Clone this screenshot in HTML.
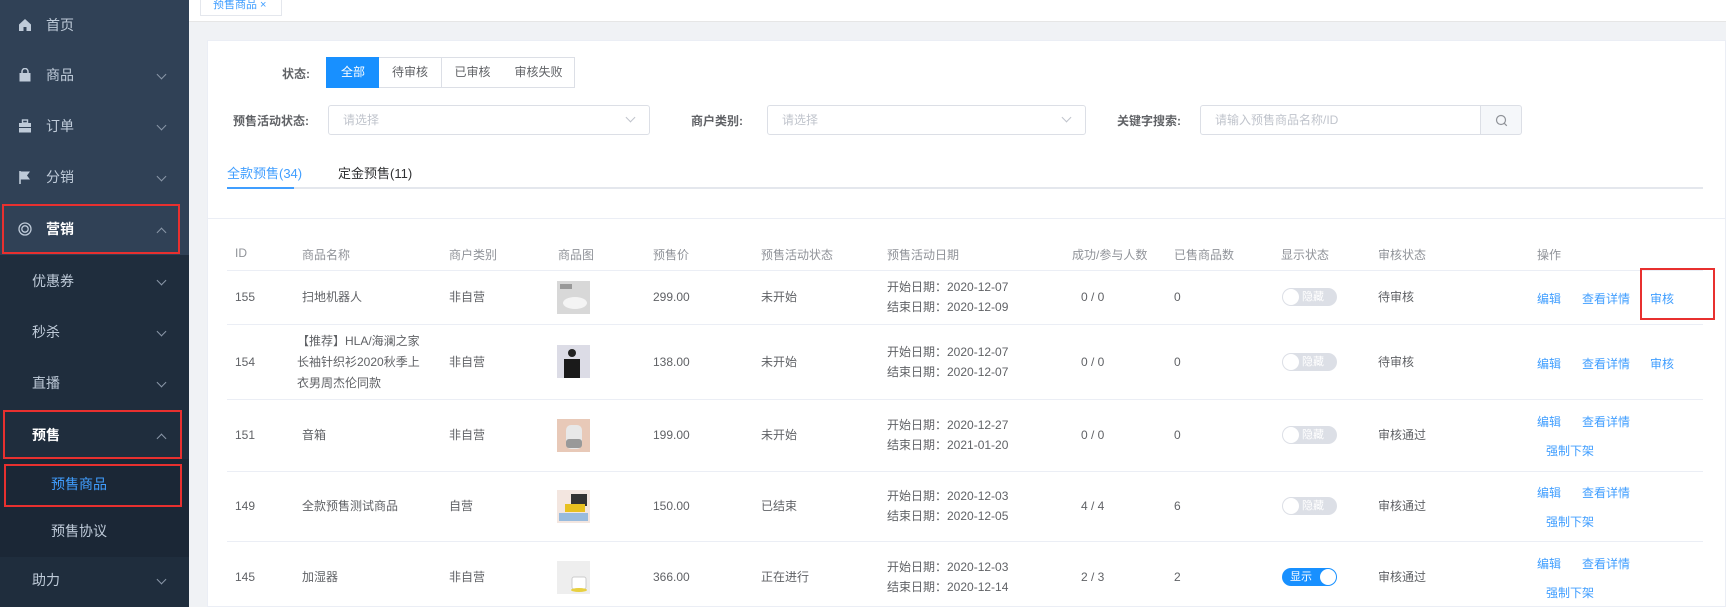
<!DOCTYPE html>
<html><head><meta charset="utf-8">
<style>
*{margin:0;padding:0;box-sizing:border-box}
body{width:1726px;height:607px;overflow:hidden;background:#f0f2f5;font-family:"Liberation Sans","Noto Sans CJK SC",sans-serif;font-size:13px;color:#606266;position:relative}
.a{position:absolute;white-space:nowrap}
#side{position:absolute;left:0;top:0;width:189px;height:607px;background:#304156}
#sub{position:absolute;left:0;top:255px;width:189px;height:352px;background:#1f2d3d}
.mi{position:absolute;left:0;width:189px;height:51px;line-height:51px;color:#bfcbd9;font-size:14px}
.mi .t{position:absolute;left:46px}
.mi .s{position:absolute;left:32px}
.mi .ss{position:absolute;left:51px}
.chev{position:absolute;left:158px;top:21px;width:7px;height:7px;border-right:1px solid #8a97a8;border-bottom:1px solid #8a97a8;transform:rotate(45deg)}
.up{transform:rotate(-135deg);top:25px}
.ico{position:absolute;left:18px;top:18px;width:14px;height:14px}
.red{position:absolute;border:2px solid #e8302f}
#card{position:absolute;left:207px;top:40px;width:1519px;height:567px;background:#fff;border:1px solid #ebeef5}
.btn{position:absolute;top:57px;height:31px;line-height:29px;text-align:center;border:1px solid #dcdfe6;background:#fff;font-size:12px;color:#606266}
.sel{position:absolute;top:105px;height:30px;border:1px solid #dcdfe6;border-radius:3px;background:#fff;color:#c0c4cc;font-size:12px;line-height:28px;padding-left:14px}
.lab{position:absolute;top:112px;font-size:12px;color:#606266;font-weight:bold}
.hl{position:absolute;left:227px;width:1476px;height:1px;background:#ebeef5}
.th{position:absolute;top:246px;font-size:12px;color:#909399}
.td{position:absolute;font-size:12px;color:#606266;line-height:20px}
.lk{position:absolute;font-size:12px;color:#409eff}
.sw{position:absolute;left:1282px;width:55px;height:18px;border-radius:9px;background:#dcdfe6;color:#fff;font-size:11px;line-height:18px}
.sw i{position:absolute;left:1px;top:1px;width:16px;height:16px;border-radius:50%;background:#fff}
.sw span{position:absolute;left:20px}
.th2{position:absolute;left:557px;width:33px;height:33px}
</style></head><body>
<div id="side"></div>
<div id="sub"></div>
<div class="mi" style="top:0"><svg class="ico" viewBox="0 0 14 14"><path d="M7 1L1 6.5V13h4.5V9h3v4H13V6.5z" fill="#bfcbd9"/></svg><span class="t">首页</span></div>
<div class="mi" style="top:50px"><svg class="ico" viewBox="0 0 14 14"><path d="M4 5V3.5a3 3 0 016 0V5" stroke="#bfcbd9" fill="none" stroke-width="1.5"/><rect x="1.5" y="5" width="11" height="8.5" fill="#bfcbd9"/></svg><span class="t">商品</span><i class="chev"></i></div>
<div class="mi" style="top:101px"><svg class="ico" viewBox="0 0 14 14"><rect x="4.5" y="1" width="5" height="3" fill="none" stroke="#bfcbd9" stroke-width="1.4"/><rect x="1" y="4" width="12" height="4" fill="#bfcbd9"/><rect x="1" y="9" width="12" height="4.5" fill="#bfcbd9"/></svg><span class="t">订单</span><i class="chev"></i></div>
<div class="mi" style="top:152px"><svg class="ico" viewBox="0 0 14 14"><path d="M2 1v13" stroke="#bfcbd9" stroke-width="1.6"/><path d="M2.5 1.5H12l-3 4 3 4H2.5z" fill="#bfcbd9"/></svg><span class="t">分销</span><i class="chev"></i></div>
<div class="mi" style="top:204px;color:#fff"><svg class="ico" viewBox="0 0 14 14"><circle cx="7" cy="7" r="6" fill="none" stroke="#bfcbd9" stroke-width="1.3"/><circle cx="7" cy="7" r="3.2" fill="none" stroke="#bfcbd9" stroke-width="1.3"/></svg><span class="t" style="font-weight:bold">营销</span><i class="chev up"></i></div>
<div class="mi" style="top:256px"><span class="s">优惠券</span><i class="chev"></i></div>
<div class="mi" style="top:307px"><span class="s">秒杀</span><i class="chev"></i></div>
<div class="mi" style="top:358px"><span class="s">直播</span><i class="chev"></i></div>
<div class="mi" style="top:410px;color:#fff"><span class="s" style="font-weight:bold">预售</span><i class="chev up"></i></div>
<div class="mi" style="top:459px;background:#1b2736;color:#409eff"><span class="ss">预售商品</span></div>
<div class="mi" style="top:506px;background:#1b2736"><span class="ss">预售协议</span></div>
<div class="mi" style="top:555px"><span class="s">助力</span><i class="chev"></i></div>
<div class="red" style="left:2px;top:204px;width:178px;height:50px"></div>
<div class="red" style="left:3px;top:410px;width:179px;height:49px"></div>
<div class="red" style="left:4px;top:464px;width:178px;height:43px"></div>

<div class="a" style="left:189px;top:0;width:1537px;height:22px;background:#fff;border-bottom:1px solid #e6e6e6"></div>
<div class="a" style="left:200px;top:0;width:82px;height:16px;background:#fff;border:1px solid #e4e7ed;border-top:0;color:#409eff;font-size:11px;line-height:10px;padding-left:12px">预售商品 ×</div>

<div id="card"></div>
<div class="a" style="left:282px;top:65px;font-size:12px;font-weight:bold">状态:</div>
<div class="btn" style="left:326px;width:54px;background:#1890ff;border-color:#1890ff;color:#fff">全部</div>
<div class="btn" style="left:379px;width:63px;border-left:0">待审核</div>
<div class="btn" style="left:441px;width:63px">已审核</div>
<div class="btn" style="left:503px;width:72px;border-left:0">审核失败</div>

<div class="lab" style="left:233px">预售活动状态:</div>
<div class="sel" style="left:328px;width:322px">请选择<i class="chev" style="left:298px;top:8px;border-color:#c0c4cc"></i></div>
<div class="lab" style="left:691px">商户类别:</div>
<div class="sel" style="left:767px;width:319px">请选择<i class="chev" style="left:295px;top:8px;border-color:#c0c4cc"></i></div>
<div class="lab" style="left:1117px">关键字搜索:</div>
<div class="sel" style="left:1200px;width:281px;border-radius:3px 0 0 3px">请输入预售商品名称/ID</div>
<div class="a" style="left:1480px;top:105px;width:42px;height:30px;background:#f5f7fa;border:1px solid #dcdfe6;border-radius:0 3px 3px 0"><svg style="position:absolute;left:14px;top:8px" width="13" height="13" viewBox="0 0 13 13"><circle cx="6" cy="6" r="4.5" fill="none" stroke="#909399" stroke-width="1.2"/><path d="M9.3 9.3l2.5 2.5" stroke="#909399" stroke-width="1.2"/></svg></div>

<div class="a" style="left:227px;top:163px;color:#409eff">全款预售(34)</div>
<div class="a" style="left:338px;top:163px;color:#303133">定金预售(11)</div>
<div class="a" style="left:227px;top:187px;width:1476px;height:2px;background:#e4e7ed"></div>
<div class="a" style="left:227px;top:187px;width:67px;height:2px;background:#409eff"></div>
<div class="a" style="left:208px;top:218px;width:1518px;height:1px;background:#ebeef5"></div>

<div class="th" style="left:235px">ID</div>
<div class="th" style="left:302px">商品名称</div>
<div class="th" style="left:449px">商户类别</div>
<div class="th" style="left:558px">商品图</div>
<div class="th" style="left:653px">预售价</div>
<div class="th" style="left:761px">预售活动状态</div>
<div class="th" style="left:887px">预售活动日期</div>
<div class="th" style="left:1072px">成功/参与人数</div>
<div class="th" style="left:1174px">已售商品数</div>
<div class="th" style="left:1281px">显示状态</div>
<div class="th" style="left:1378px">审核状态</div>
<div class="th" style="left:1537px">操作</div>
<div class="hl" style="top:270px"></div>
<div class="hl" style="top:324px"></div>
<div class="hl" style="top:399px"></div>
<div class="hl" style="top:471px"></div>
<div class="hl" style="top:541px"></div>

<!-- row1 c=297 -->
<div class="td" style="left:235px;top:287px">155</div>
<div class="td" style="left:302px;top:287px">扫地机器人</div>
<div class="td" style="left:449px;top:287px">非自营</div>
<svg class="th2" style="top:281px" viewBox="0 0 33 33"><rect width="33" height="33" fill="#d8d8d8"/><ellipse cx="18" cy="22" rx="12" ry="6" fill="#f4f4f4"/><rect x="3" y="3" width="12" height="5" fill="#999"/></svg>
<div class="td" style="left:653px;top:287px">299.00</div>
<div class="td" style="left:761px;top:287px">未开始</div>
<div class="td" style="left:887px;top:277px">开始日期：2020-12-07<br>结束日期：2020-12-09</div>
<div class="td" style="left:1081px;top:287px">0 / 0</div>
<div class="td" style="left:1174px;top:287px">0</div>
<div class="sw" style="top:288px"><i></i><span>隐藏</span></div>
<div class="td" style="left:1378px;top:287px">待审核</div>
<div class="lk" style="left:1537px;top:290px">编辑</div>
<div class="lk" style="left:1582px;top:290px">查看详情</div>
<div class="lk" style="left:1650px;top:290px">审核</div>
<div class="red" style="left:1640px;top:268px;width:75px;height:52px"></div>

<!-- row2 c=362 -->
<div class="td" style="left:235px;top:352px">154</div>
<div class="td" style="left:297px;top:331px;line-height:21px">【推荐】HLA/海澜之家<br>长袖针织衫2020秋季上<br>衣男周杰伦同款</div>
<div class="td" style="left:449px;top:352px">非自营</div>
<svg class="th2" style="top:345px" viewBox="0 0 33 33"><rect width="33" height="33" fill="#dcdce6"/><circle cx="15" cy="8" r="4" fill="#222"/><path d="M7 14h16v19H7z" fill="#1a1a1a"/></svg>
<div class="td" style="left:653px;top:352px">138.00</div>
<div class="td" style="left:761px;top:352px">未开始</div>
<div class="td" style="left:887px;top:342px">开始日期：2020-12-07<br>结束日期：2020-12-07</div>
<div class="td" style="left:1081px;top:352px">0 / 0</div>
<div class="td" style="left:1174px;top:352px">0</div>
<div class="sw" style="top:353px"><i></i><span>隐藏</span></div>
<div class="td" style="left:1378px;top:352px">待审核</div>
<div class="lk" style="left:1537px;top:355px">编辑</div>
<div class="lk" style="left:1582px;top:355px">查看详情</div>
<div class="lk" style="left:1650px;top:355px">审核</div>

<!-- row3 c=435 -->
<div class="td" style="left:235px;top:425px">151</div>
<div class="td" style="left:302px;top:425px">音箱</div>
<div class="td" style="left:449px;top:425px">非自营</div>
<svg class="th2" style="top:419px" viewBox="0 0 33 33"><rect width="33" height="33" fill="#e8c9b8"/><rect x="9" y="6" width="16" height="24" rx="5" fill="#e8e8e8"/><rect x="9" y="20" width="16" height="9" rx="3" fill="#999"/></svg>
<div class="td" style="left:653px;top:425px">199.00</div>
<div class="td" style="left:761px;top:425px">未开始</div>
<div class="td" style="left:887px;top:415px">开始日期：2020-12-27<br>结束日期：2021-01-20</div>
<div class="td" style="left:1081px;top:425px">0 / 0</div>
<div class="td" style="left:1174px;top:425px">0</div>
<div class="sw" style="top:426px"><i></i><span>隐藏</span></div>
<div class="td" style="left:1378px;top:425px">审核通过</div>
<div class="lk" style="left:1537px;top:413px">编辑</div>
<div class="lk" style="left:1582px;top:413px">查看详情</div>
<div class="lk" style="left:1546px;top:442px">强制下架</div>

<!-- row4 c=506 -->
<div class="td" style="left:235px;top:496px">149</div>
<div class="td" style="left:302px;top:496px">全款预售测试商品</div>
<div class="td" style="left:449px;top:496px">自营</div>
<svg class="th2" style="top:490px" viewBox="0 0 33 33"><rect width="33" height="33" fill="#f3e6e0"/><rect x="14" y="4" width="16" height="12" fill="#333"/><rect x="8" y="14" width="20" height="8" fill="#e8c020"/><rect x="2" y="23" width="29" height="8" fill="#9bd"/></svg>
<div class="td" style="left:653px;top:496px">150.00</div>
<div class="td" style="left:761px;top:496px">已结束</div>
<div class="td" style="left:887px;top:486px">开始日期：2020-12-03<br>结束日期：2020-12-05</div>
<div class="td" style="left:1081px;top:496px">4 / 4</div>
<div class="td" style="left:1174px;top:496px">6</div>
<div class="sw" style="top:497px"><i></i><span>隐藏</span></div>
<div class="td" style="left:1378px;top:496px">审核通过</div>
<div class="lk" style="left:1537px;top:484px">编辑</div>
<div class="lk" style="left:1582px;top:484px">查看详情</div>
<div class="lk" style="left:1546px;top:513px">强制下架</div>

<!-- row5 c=577 -->
<div class="td" style="left:235px;top:567px">145</div>
<div class="td" style="left:302px;top:567px">加湿器</div>
<div class="td" style="left:449px;top:567px">非自营</div>
<svg class="th2" style="top:561px" viewBox="0 0 33 33"><rect width="33" height="33" fill="#eee"/><rect x="15" y="16" width="14" height="12" rx="2" fill="#fff" stroke="#ccc"/><ellipse cx="22" cy="29" rx="8" ry="2" fill="#e8d040"/></svg>
<div class="td" style="left:653px;top:567px">366.00</div>
<div class="td" style="left:761px;top:567px">正在进行</div>
<div class="td" style="left:887px;top:557px">开始日期：2020-12-03<br>结束日期：2020-12-14</div>
<div class="td" style="left:1081px;top:567px">2 / 3</div>
<div class="td" style="left:1174px;top:567px">2</div>
<div class="sw" style="top:568px;background:#1890ff"><i style="left:38px"></i><span style="left:8px">显示</span></div>
<div class="td" style="left:1378px;top:567px">审核通过</div>
<div class="lk" style="left:1537px;top:555px">编辑</div>
<div class="lk" style="left:1582px;top:555px">查看详情</div>
<div class="lk" style="left:1546px;top:584px">强制下架</div>
</body></html>
